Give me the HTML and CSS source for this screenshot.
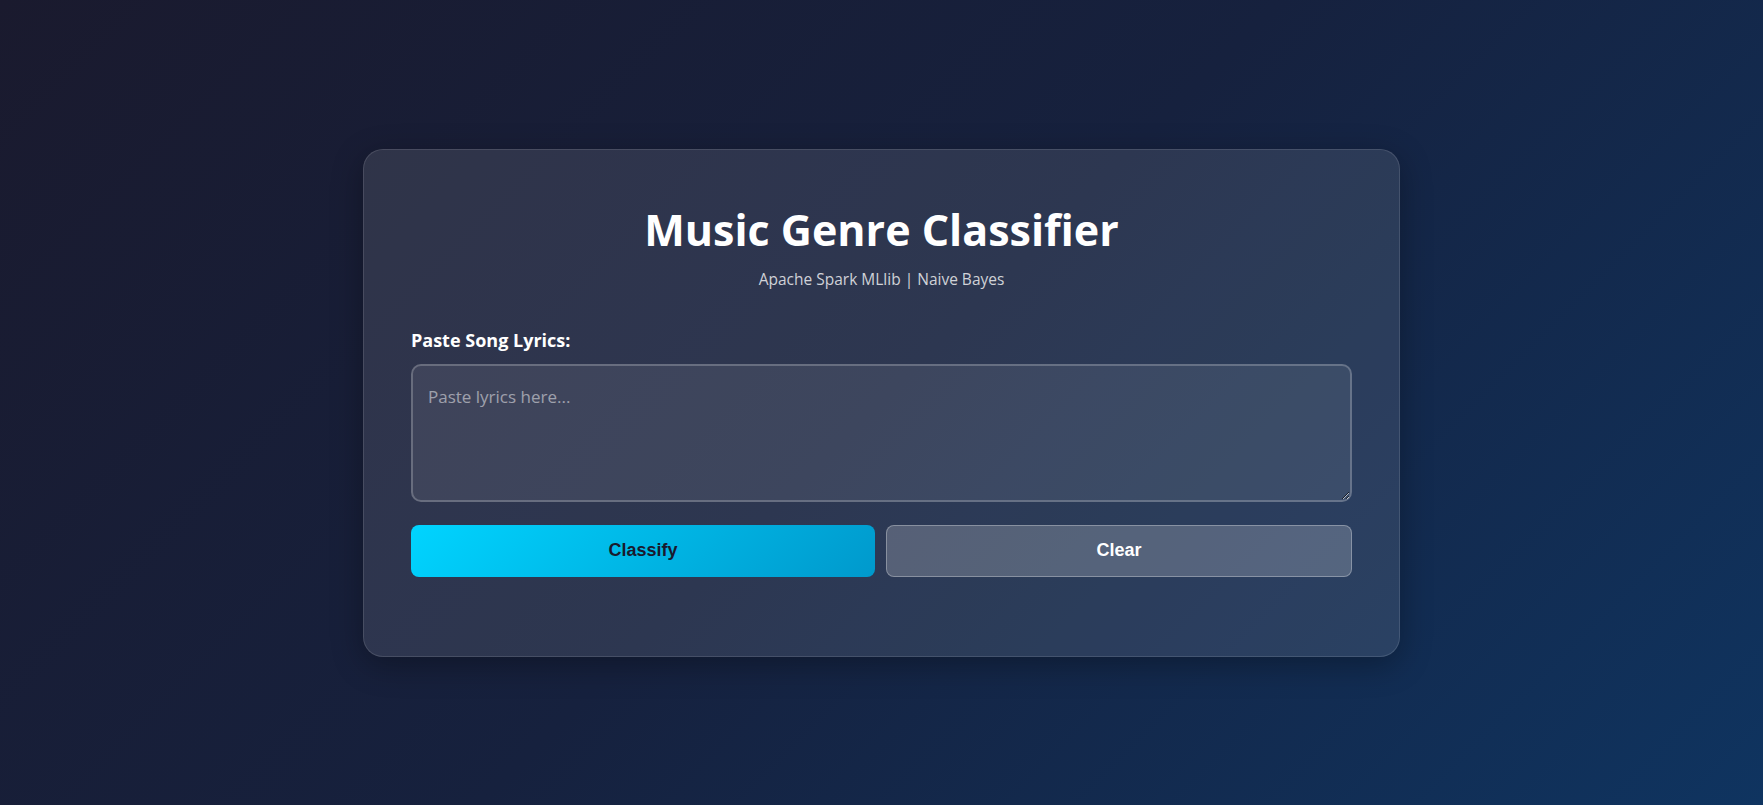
FILE: index.html
```html
<!DOCTYPE html>
<html lang="en">
<head>
<meta charset="utf-8">
<title>Music Genre Classifier</title>
<link rel="stylesheet" href="styles.css">
</head>
<body>
<main class="card">
  <h1 class="title">Music Genre Classifier</h1>
  <p class="subtitle">Apache Spark MLlib | Naive Bayes</p>
  <label class="label" for="lyrics">Paste Song Lyrics:</label>
  <textarea id="lyrics" class="lyrics" placeholder="Paste lyrics here..."></textarea>
  <div class="actions">
    <button class="btn btn-primary" type="button">Classify</button>
    <button class="btn btn-secondary" type="button">Clear</button>
  </div>
</main>
</body>
</html>
```

FILE: styles.css
```css
* { box-sizing: border-box; }
html, body { height: 100%; }
body {
  margin: 0;
  min-height: 100vh;
  font-family: "Open Sans", "Noto Sans", sans-serif;
  color: #fff;
  background: linear-gradient(135deg, #1a1a2e 0%, #16213e 50%, #0f3460 100%);
  display: flex;
  align-items: center;
  justify-content: center;
}
.card {
  width: 1037px;
  padding: 47px 47px 79px;
  background: rgba(255, 255, 255, 0.1);
  border: 1px solid rgba(255, 255, 255, 0.12);
  border-radius: 20px;
  box-shadow: 0 8px 32px rgba(0, 0, 0, 0.3);
  display: flex;
  flex-direction: column;
}
.title {
  margin: 8px 0 0;
  font-size: 43px;
  line-height: 50px;
  font-weight: 700;
  text-align: center;
}
.subtitle {
  margin: 13px 0 0;
  font-size: 15.5px;
  line-height: 22px;
  text-align: center;
  color: rgba(255, 255, 255, 0.78);
}
.label {
  margin-top: 38px;
  font-size: 18px;
  line-height: 24px;
  font-weight: 700;
}
.lyrics {
  margin-top: 12px;
  width: 100%;
  height: 138px;
  padding: 19px 15px 15px;
  border: 2px solid rgba(255, 255, 255, 0.22);
  border-radius: 10px;
  background: rgba(255, 255, 255, 0.08);
  color: #fff;
  font-family: "Open Sans", "Noto Sans", sans-serif;
  font-size: 17px;
  resize: vertical;
  outline: none;
}
.lyrics::placeholder { color: rgba(255, 255, 255, 0.5); }
.actions {
  margin-top: 23px;
  display: flex;
  gap: 11px;
}
.btn {
  flex: 1;
  height: 52px;
  border-radius: 8px;
  font-family: "Liberation Sans", Arial, sans-serif;
  font-size: 18px;
  font-weight: 700;
  cursor: pointer;
}
.btn-primary {
  border: none;
  color: #1a1a2e;
  background: linear-gradient(135deg, #00d4ff 0%, #0099cc 100%);
}
.btn-secondary {
  border: 1px solid rgba(255, 255, 255, 0.3);
  color: #fff;
  background: rgba(255, 255, 255, 0.2);
}
```
